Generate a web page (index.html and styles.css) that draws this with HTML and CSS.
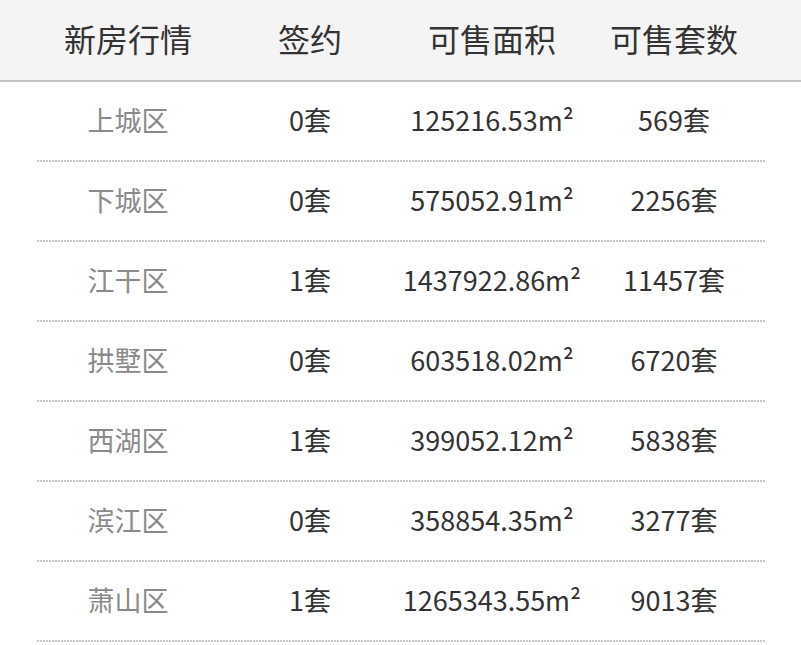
FILE: index.html
```html
<!DOCTYPE html>
<html lang="zh-CN">
<head>
<meta charset="utf-8">
<title>新房行情</title>
<link rel="stylesheet" href="styles.css">
</head>
<body>
<div class="table">
  <div class="head">
    <div class="row head-row">
      <div class="cell">新房行情</div>
      <div class="cell">签约</div>
      <div class="cell">可售面积</div>
      <div class="cell">可售套数</div>
    </div>
  </div>
  <div class="body">
    <div class="row"><div class="cell name">上城区</div><div class="cell">0套</div><div class="cell">125216.53m²</div><div class="cell">569套</div></div>
    <div class="row"><div class="cell name">下城区</div><div class="cell">0套</div><div class="cell">575052.91m²</div><div class="cell">2256套</div></div>
    <div class="row"><div class="cell name">江干区</div><div class="cell">1套</div><div class="cell">1437922.86m²</div><div class="cell">11457套</div></div>
    <div class="row"><div class="cell name">拱墅区</div><div class="cell">0套</div><div class="cell">603518.02m²</div><div class="cell">6720套</div></div>
    <div class="row"><div class="cell name">西湖区</div><div class="cell">1套</div><div class="cell">399052.12m²</div><div class="cell">5838套</div></div>
    <div class="row"><div class="cell name">滨江区</div><div class="cell">0套</div><div class="cell">358854.35m²</div><div class="cell">3277套</div></div>
    <div class="row"><div class="cell name">萧山区</div><div class="cell">1套</div><div class="cell">1265343.55m²</div><div class="cell">9013套</div></div>
  </div>
</div>
</body>
</html>
```
FILE: styles.css
```css
html, body {
  margin: 0;
  padding: 0;
  background: #ffffff;
}
body {
  font-family: "Noto Sans CJK SC", "Noto Sans", sans-serif;
  color: #333333;
}
.head {
  background: #f4f4f4;
  border-bottom: 2px solid #c6c6c6;
}
.row {
  display: grid;
  grid-template-columns: repeat(4, 182px);
  margin: 0 36px 0 37px;
  box-sizing: border-box;
  height: 80px;
  align-items: center;
}
.head-row {
  font-size: 32px;
  padding-bottom: 4px;
  color: #333333;
}
.body .row {
  font-size: 27px;
  padding-bottom: 6px;
  background-image: linear-gradient(to right, #c8c8c8 0 2px, transparent 2px 3px);
  background-size: 3px 2px;
  background-repeat: repeat-x;
  background-position: left bottom;
}
.cell {
  text-align: center;
  white-space: nowrap;
  line-height: 1;
}
.name {
  color: #8a8a8a;
}
```
